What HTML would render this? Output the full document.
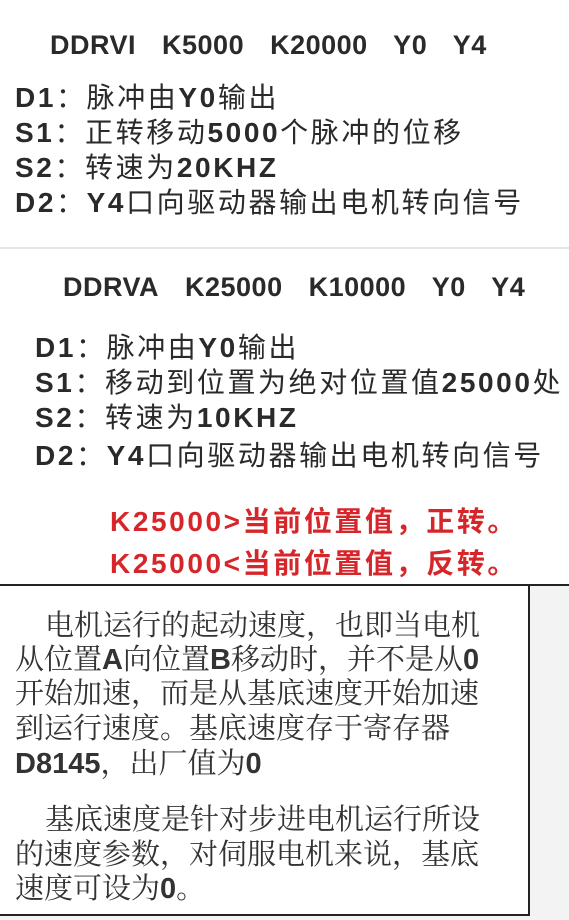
<!DOCTYPE html>
<html><head><meta charset="utf-8"><style>
body{margin:0;width:569px;height:920px;background:#fff;position:relative;overflow:hidden;font-family:"Liberation Sans","Noto Sans CJK SC",sans-serif;color:#2a2a2a}
.l{position:absolute;white-space:nowrap;font-size:28px;line-height:34px;letter-spacing:2.6px}
b{font-weight:bold}
.h{font-weight:bold;font-size:27px;word-spacing:5px;letter-spacing:0.5px}
.r{color:#d6262a;font-weight:bold}
.s{font-family:"Liberation Serif","Noto Serif CJK SC",serif;font-size:29px;color:#333;letter-spacing:0}
.s b{font-family:"Liberation Sans",sans-serif}
</style></head><body>
<div class="l h" style="left:50px;top:28px">DDRVI&nbsp; K5000&nbsp; K20000&nbsp; Y0&nbsp; Y4</div>
<div class="l" style="left:15px;top:81px"><b>D1</b>：脉冲由<b>Y0</b>输出</div>
<div class="l" style="left:15px;top:116px"><b>S1</b>：正转移动<b>5000</b>个脉冲的位移</div>
<div class="l" style="left:15px;top:151px"><b>S2</b>：转速为<b>20KHZ</b></div>
<div class="l" style="left:15px;top:186px"><b>D2</b>：<b>Y4</b>口向驱动器输出电机转向信号</div>
<div style="position:absolute;left:0;top:247px;width:569px;height:2px;background:#e6e6e6"></div>
<div class="l h" style="left:63px;top:270px">DDRVA&nbsp; K25000&nbsp; K10000&nbsp; Y0&nbsp; Y4</div>
<div class="l" style="left:35px;top:331px"><b>D1</b>：脉冲由<b>Y0</b>输出</div>
<div class="l" style="left:35px;top:366px"><b>S1</b>：移动到位置为绝对位置值<b>25000</b>处</div>
<div class="l" style="left:35px;top:401px"><b>S2</b>：转速为<b>10KHZ</b></div>
<div class="l" style="left:35px;top:439px"><b>D2</b>：<b>Y4</b>口向驱动器输出电机转向信号</div>
<div class="l r" style="left:110px;top:505px">K25000&gt;当前位置值，正转。</div>
<div class="l r" style="left:110px;top:547px">K25000&lt;当前位置值，反转。</div>
<div style="position:absolute;left:0;top:584px;width:569px;height:2px;background:#222"></div>
<div style="position:absolute;left:529px;top:586px;width:40px;height:334px;background:#f3f3f3"></div>
<div style="position:absolute;left:528px;top:586px;width:2px;height:330px;background:#222"></div>
<div style="position:absolute;left:0;top:914px;width:530px;height:2px;background:#222"></div>
<div style="position:absolute;left:0;top:916px;width:569px;height:4px;background:#f3f3f3"></div>
<div class="l s" style="left:45px;top:609px">电机运行的起动速度，也即当电机</div>
<div class="l s" style="left:15px;top:643px">从位置<b>A</b>向位置<b>B</b>移动时，并不是从<b>0</b></div>
<div class="l s" style="left:15px;top:677px">开始加速，而是从基底速度开始加速</div>
<div class="l s" style="left:15px;top:712px">到运行速度。基底速度存于寄存器</div>
<div class="l s" style="left:15px;top:747px"><b>D8145</b>，出厂值为<b>0</b></div>
<div class="l s" style="left:45px;top:803px">基底速度是针对步进电机运行所设</div>
<div class="l s" style="left:15px;top:838px">的速度参数，对伺服电机来说，基底</div>
<div class="l s" style="left:15px;top:872px">速度可设为<b>0</b>。</div>
</body></html>
